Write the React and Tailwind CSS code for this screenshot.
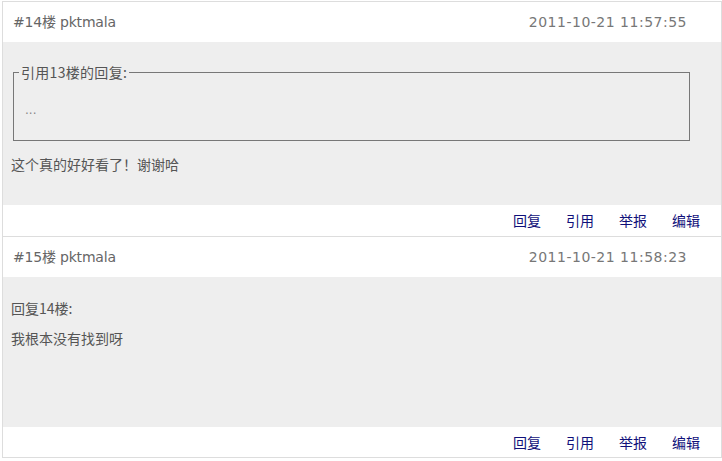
const latin = "font-['DejaVu_Sans','Noto_Sans_CJK_SC',sans-serif]";
const cjk = "font-['Noto_Sans_CJK_SC','DejaVu_Sans',sans-serif]";

const posts = [
  {
    floor: 14,
    user: "pktmala",
    time: "2011-10-21 11:57:55",
    quote: { title: "引用13楼的回复:", text: "..." },
    lines: ["这个真的好好看了！谢谢哈"],
    bodyH: "h-[163px]",
    footH: "h-[31px]",
  },
  {
    floor: 15,
    user: "pktmala",
    time: "2011-10-21 11:58:23",
    lines: ["回复14楼:", "我根本没有找到呀"],
    bodyH: "h-[150px]",
    footH: "h-[30px]",
  },
];

function Post({ post }) {
  return (
    <div className="border-b border-[#ddd]">
      <div className="h-[40px] flex items-center justify-between pl-[10px] pr-[34px] bg-white">
        <span className={`${latin} text-[14px] tracking-[-0.2px] text-[#666]`}>
          #{post.floor}楼 {post.user}
        </span>
        <span className={`${latin} text-[14px] tracking-[0.5px] text-[#777]`}>
          {post.time}
        </span>
      </div>

      <div className={`${post.bodyH} bg-[#eeeeee] px-[8px] ${post.quote ? "pt-[20px]" : "pt-[21px]"}`}>
        {post.quote && (
          <fieldset className="border border-[#777] ml-[2px] w-[677px] pl-[5px] pb-[20px] mb-[13px]">
            <legend className={`${cjk} px-[2px] text-[14px] tracking-[0.3px] leading-[20px] text-[#555]`}>
              {post.quote.title}
            </legend>
            <div className={`${latin} pl-[6px] mt-[18px] text-[12px] leading-[20px] text-[#888]`}>
              {post.quote.text}
            </div>
          </fieldset>
        )}
        <div className="flex flex-col gap-[10px]">
          {post.lines.map((line, i) => (
            <p key={i} className={`${cjk} text-[14px] leading-[20px] text-[#555]`}>
              {line}
            </p>
          ))}
        </div>
      </div>

      <div className={`${post.footH} bg-white flex items-center justify-end gap-[25px] pr-[21px]`}>
        {["回复", "引用", "举报", "编辑"].map((t) => (
          <a key={t} className={`${cjk} text-[14px] text-[#10107a] cursor-pointer`}>
            {t}
          </a>
        ))}
      </div>
    </div>
  );
}

export default function App() {
  return (
    <div className="w-[722px] h-[461px] bg-white pl-[2px] pt-[1px]">
      <div className="w-[720px] border-l border-r border-t border-[#ddd]">
        {posts.map((p) => (
          <Post key={p.floor} post={p} />
        ))}
      </div>
    </div>
  );
}
